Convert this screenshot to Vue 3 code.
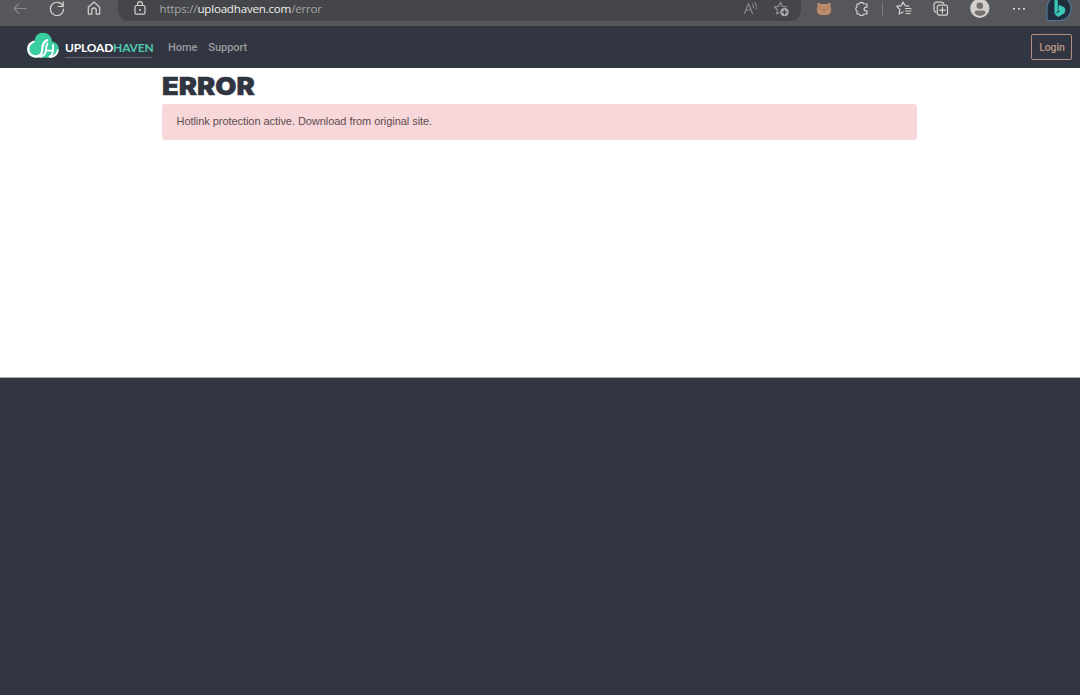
<script setup>
const links = ['Home', 'Support']
</script>

<template>
  <div class="window">
    <header class="toolbar">
      <div class="controls">
        <svg class="back" width="16" height="18" viewBox="0 0 16 18"><path d="M14 8.5H2M6.5 4 2 8.5l4.5 4.5" /></svg>
        <svg width="18" height="18" viewBox="0 0 18 18"><path d="M15 6.1A6.6 6.6 0 1 0 15.6 9M15.2 1.8v4.7h-4.8" /></svg>
        <svg width="16" height="18" viewBox="0 0 16 18"><path d="M2.3 7.2 8 2l5.7 5.2v6.9h-3.5v-4a2.2 2.2 0 0 0-4.4 0v4H2.3z" /></svg>
      </div>
      <div class="address">
        <svg width="14" height="18" viewBox="0 0 14 18"><rect x="2" y="5.5" width="10" height="8.7" rx="1.5" /><path d="M4.6 5.5V4a2.4 2.4 0 0 1 4.8 0v1.5" /><circle class="dot" cx="7" cy="10" r="1" /></svg>
        <span class="url">https://<b>uploadhaven.com</b>/error</span>
        <div class="page-tools">
          <svg width="16" height="18" viewBox="0 0 16 18"><path d="m1.5 13.5 4-10 4 10M3 10h5M9.5 4.2q1.3 1.5.8 3.5M12 2.8q2 2.6 1.2 5.8" /></svg>
          <svg width="18" height="18" viewBox="0 0 18 18"><path d="M6.8 12.2 3.7 14l.7-4.1-3-3 4.2-.6L7.5 2.5l1.8 3.8 4.2.6" /><circle class="dot" cx="11.5" cy="12.2" r="4.1" /><path class="cut" d="M9.4 12.2h4.2M11.5 10.1v4.2" /></svg>
        </div>
      </div>
      <div class="extensions">
        <svg class="bear" width="16" height="18" viewBox="0 0 16 18"><path d="M1.2 3.8Q3 2 4.6 4h6.8q1.7-2 3.4-.2l-.5 2.4q1.9 4.5-.4 7.2-1.2 1.6-5.9 1.6t-5.9-1.6Q-.2 10.7 1.7 6.2z" /><path class="face" d="M4.5 8h.1M11.4 8h.1M7.2 10h1.6" /></svg>
        <svg width="16" height="18" viewBox="0 0 16 18"><path d="M3 4h2.2a2.4 2.4 0 0 1 4.6 0H13v3.1h-1a1.9 1.9 0 0 0 0 3.8h1V14H9.8a2.4 2.4 0 0 1-4.6 0H3v-3a2.2 2.2 0 0 1 0-4z" /></svg>
        <i class="divider"></i>
        <svg width="18" height="18" viewBox="0 0 18 18"><path d="M8.2 12 4.1 14l.8-4.5-3.2-3.1 4.5-.7L8 2l2.1 3.7 3.7.4M10.5 8.5H16M10.5 11H16M11 13.5h4" /></svg>
        <svg width="18" height="18" viewBox="0 0 18 18"><path d="M4.1 12.2Q2 11.8 2 9.5V5q0-2.8 2.8-2.8h4q2.6 0 3.1 2" /><rect x="5.3" y="5.2" width="10.2" height="10" rx="2" /><path d="M10.4 7.4v5.6M7.6 10.2h5.6" /></svg>
        <svg class="avatar" width="20" height="20" viewBox="0 0 20 20"><circle class="disc" cx="9.8" cy="8.3" r="9.6" /><circle class="person" cx="9.8" cy="5.8" r="3.3" /><path class="person" d="M4.4 13q0-2.6 2.6-2.6h6q2.6 0 2.6 2.6-2.1 3-5.6 3t-5.6-3" /></svg>
        <svg class="more" width="14" height="18" viewBox="0 0 14 18"><circle cx="2" cy="8.8" r="1" /><circle cx="7" cy="8.8" r="1" /><circle cx="12" cy="8.8" r="1" /></svg>
        <svg class="bing" width="26" height="23" viewBox="0 0 26 23"><path class="bubble" d="M1 20.5V8A12 12 0 0 1 13-4 12 12 0 0 1 25 8.7a12 12 0 0 1-12 11.8z" /><path class="letter" d="m8.5-1 3.3 1.5v11l-3.3 2.7z" /><path class="letter" d="m12.6 4.8 5.2 2.3q3 3.2.3 6.3l-5.9 3.6-3.7-2.8 5.3-2.7-1.5-1.2z" /></svg>
      </div>
    </header>

    <nav class="navbar">
      <div class="brand">
        <svg width="34" height="28" viewBox="0 0 34 28">
          <path class="cloud" d="M8.4 9Q9.3 1 17 .8 24.8 1 26 9.2q6.8 1.7 6.8 8.5-.8 7.2-8 8.1H11Q1.8 25.8 1 17.7 1 11 8.4 9z" />
          <path class="swirl" d="M7.5 9.8Q2.2 12 2.2 17.2q.8 7.3 8 7.3 6-.4 6.1-7.2.3-7.4 5-9.2" />
          <path class="swirl thin" d="M21.5 11.5q-1.3 2-1.4 6.1-.4 5.7-6 7.2M20.2 18.7H27M27 13v5.7q-.1 4-3.6 6.1h2.2q5.7-1.2 6.2-6.6" />
        </svg>
        <div class="wordmark"><span>UPLOAD</span><span class="green">HAVEN</span></div>
      </div>
      <div class="links"><a v-for="link in links" :key="link">{{ link }}</a></div>
      <button class="login">Login</button>
    </nav>

    <main>
      <h1>ERROR</h1>
      <div class="alert">Hotlink protection active. Download from original site.</div>
    </main>
    <footer></footer>
  </div>
</template>

<style>
body { margin: 0; }
</style>

<style scoped>
.window { width: 1080px; height: 695px; display: flex; flex-direction: column; overflow: hidden; background: #fff; font-family: "Liberation Sans", Arial, sans-serif; }
svg { display: block; flex: none; fill: none; stroke: #d5d3d2; stroke-width: 1.2; stroke-linecap: round; stroke-linejoin: round; }
.toolbar { height: 26px; flex: none; display: flex; align-items: flex-start; background: #55575a; overflow: hidden; }
.controls { width: 118px; box-sizing: border-box; padding-left: 12px; display: flex; }
.controls svg + svg { margin-left: 20px; }
svg.back { stroke: #87898b; }
.address { width: 683px; height: 21px; box-sizing: border-box; padding: 0 10px 0 15px; display: flex; background: #444649; border-radius: 0 0 11px 11px; }
.url { margin-left: 12.5px; font: 11.6px/18px "Open Sans", sans-serif; letter-spacing: -0.21px; color: #a5a5a6; white-space: nowrap; }
.url b { font-weight: 400; color: #f0f0f0; }
.page-tools { margin-left: auto; display: flex; gap: 14px; }
.page-tools svg { stroke: #919294; }
.page-tools svg:first-child { stroke: #858688; }
.dot { fill: #d5d3d2; stroke: none; }
.page-tools .dot { fill: #aaaaab; }
.cut { stroke: #444649; }
.extensions { display: flex; flex: 1; padding-left: 15px; }
.bear { fill: #bd8d6e; stroke: none; margin-right: 22px; }
.face { stroke: #98684f; }
.divider { width: 1px; height: 14px; margin: 2px 12px 0 12px; background: #77797b; }
.divider + svg { margin-right: 19px; }
.avatar { margin-left: 20px; stroke: none; }
.disc { fill: #d4cfcd; }
.person { fill: #77736f; }
.more { margin-left: 22px; fill: #e5e5e5; stroke: none; }
.bing { margin-left: 20px; }
.bubble { fill: #202e3e; stroke: #527895; }
.letter { fill: #3cc7b9; stroke: none; }
.navbar { height: 42px; flex: none; box-sizing: border-box; padding: 0 8px 0 26px; display: flex; align-items: center; background: #313642; }
.brand { display: flex; align-items: center; }
.brand svg { margin-top: -3px; }
.cloud { fill: #3bcda2; stroke: none; }
.swirl { stroke: #fff; stroke-width: 2.3; }
.thin { stroke-width: 1.8; }
.wordmark { width: 87px; height: 19px; margin: 3px 0 0 5px; box-sizing: border-box; border-bottom: 1px solid #626674; font: 700 12px/17px Lato, sans-serif; letter-spacing: -0.18px; color: #fff; white-space: nowrap; }
.green { color: #4cc9ae; }
.links { display: flex; gap: 11px; margin: 1px 0 0 16px; font: 500 11px/18px Roboto, sans-serif; letter-spacing: -0.05px; color: #9a9b9f; }
.login { margin-left: auto; width: 41px; height: 26px; box-sizing: border-box; padding: 1px 0 0 1px; border: 1px solid #b38f80; border-radius: 2px; background: transparent; color: #b99686; font: 500 10.5px/23px Roboto, sans-serif; letter-spacing: -0.1px; }
main { height: 310px; flex: none; box-sizing: border-box; padding: 5px 163px 0 162px; border-bottom: 1px solid #aaaab0; }
h1 { width: max-content; margin: 0 0 4px; font: 900 24px/27px Inter, sans-serif; transform: scaleX(1.14); transform-origin: left; -webkit-text-stroke: 0.5px #303541; color: #303541; }
.alert { height: 36px; box-sizing: border-box; padding-left: 14.5px; border-radius: 3px; background: #f7d7d9; color: #5d4d4f; font-size: 11px; line-height: 35px; letter-spacing: -0.055px; }
footer { flex: 1; background: #323642; }
</style>
